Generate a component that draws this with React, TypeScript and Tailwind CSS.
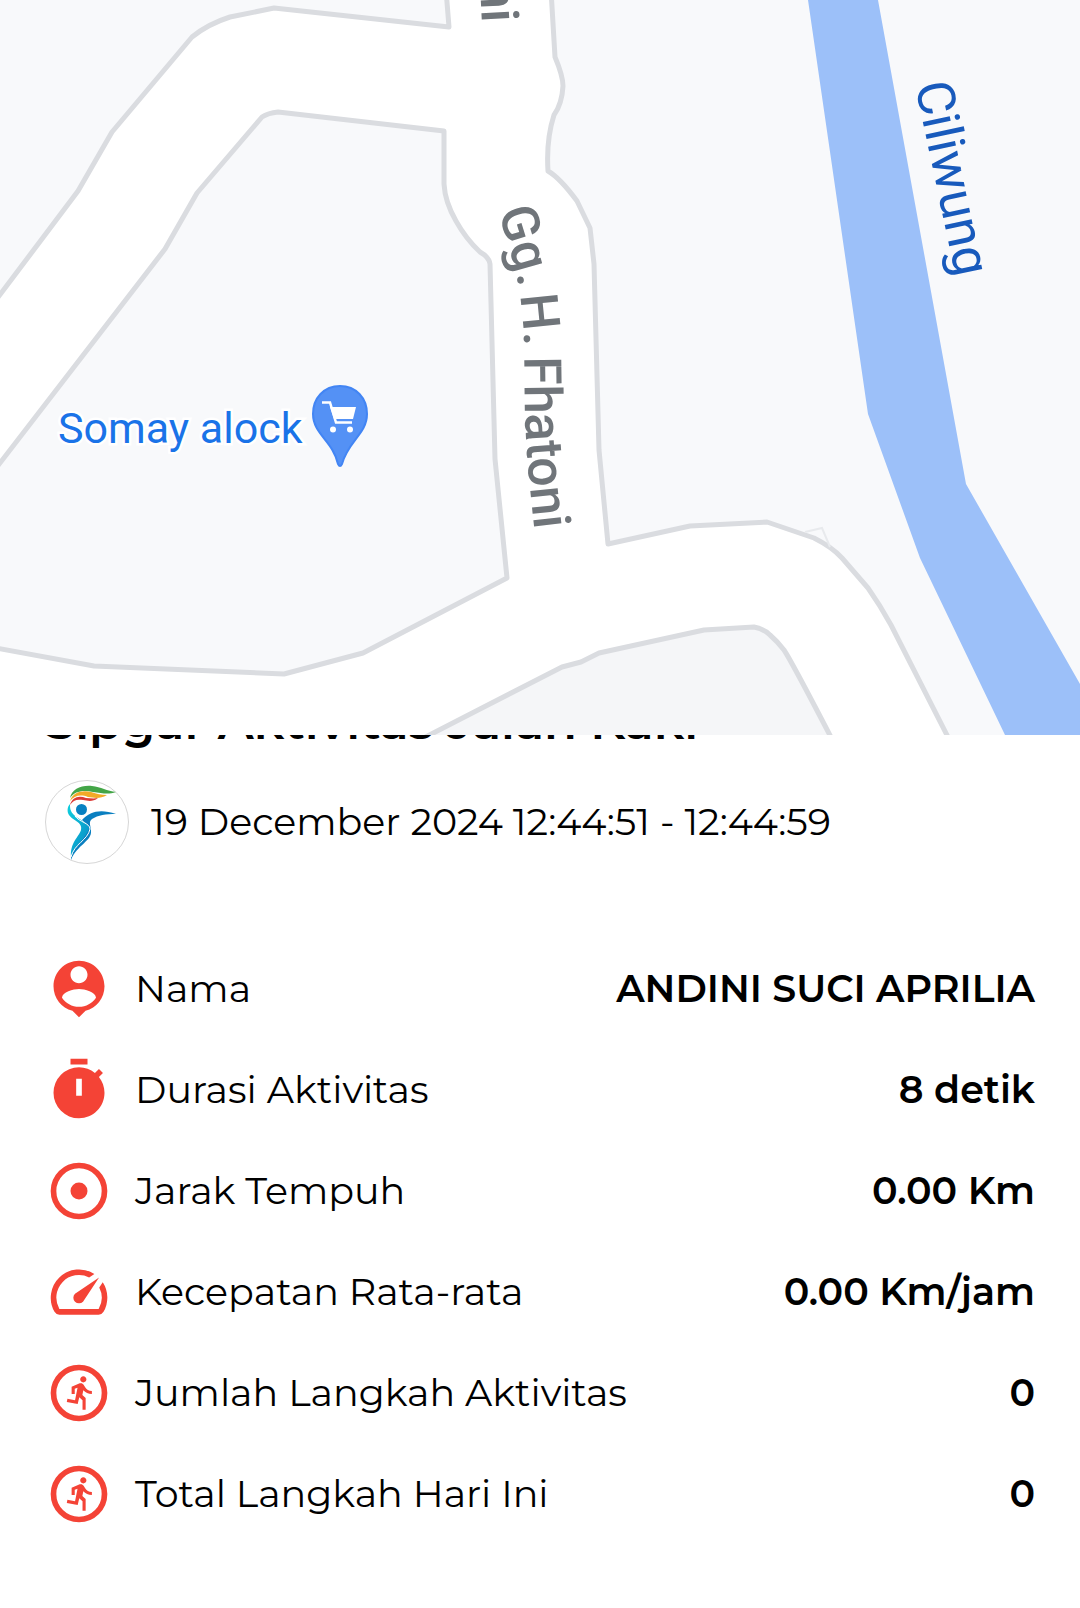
import React from "react";

const land = "fill-[#f8f9fb] stroke-[#dadce0]";

const MapView: React.FC = () => {
  return (
    <svg
      viewBox="0 0 1080 735"
      className="relative z-10 block h-auto w-full bg-white"
      role="img"
      aria-label="Peta rute aktivitas"
    >
      <rect width="1080" height="735" fill="#ffffff" />
      <g strokeWidth="5" strokeLinejoin="round" className={land}>
        <path d="M-10 308 L78 191 L112 132 L192 37 Q208 24 230 17 L274 8 L449 27 L446 -10 H-10 Z" />
        <path d="M-10 476 L165 249 L197 193 L262 117 Q268 113 278 112 L444 131 L444 184 Q445 202 456 221 Q466 239 480 252 Q489 257 490 264 L495 459 L507 578 L363 653 L284 674 L94 666 L-10 647 Z" />
        <path d="M551 -10 L555 57 Q563 76 563 86 Q562 104 554 115 Q546 140 548 171 Q560 178 577 201 L590 228 L594 264 L599 450 L608 544 L690 526 L767 522 L814 538 Q832 547 842 558 L868 588 Q880 605 891 625 L952 745 H1090 V-10 Z" />
        <path
          d="M410 745 L480 709 L562 667 L581 662 L599 653 L704 630 L754 627 Q764 629 770 635 Q778 642 784 650 Q792 662 835 745 Z"
          fill="#f5f6f8"
        />
      </g>
      <path
        d="M805 532 L822 528 L830 547"
        fill="none"
        stroke="#e8eaed"
        strokeWidth="2"
      />
      <path
        d="M808 0 L868 414 L920 558 L1005 735 H1080 V684 L966 484 L878 0 Z"
        fill="#9cc0f9"
      />

      <g className="font-['Roboto',sans-serif]">
        <g fill="#70757a" fontSize="52" fontWeight="500">
          <path
            id="street"
            d="M498 212 Q506 236 515 268 Q522 300 524 340 L525 420 Q527 470 538 560"
            fill="none"
          />
          <text>
            <textPath href="#street">
              Gg. <tspan dx="-6">H. </tspan>
              <tspan dx="-3">Fhatoni</tspan>
            </textPath>
          </text>
          <text textAnchor="end" transform="translate(482 23) rotate(87)">
            Gg. H. Fhatoni
          </text>
        </g>
        <text
          fontSize="52"
          fill="#185abc"
          transform="translate(915 85) rotate(78)"
        >
          Ciliwung
        </text>
        <text
          x="58"
          y="443"
          fontSize="43"
          fill="#1a73e8"
          stroke="#ffffff"
          strokeWidth="5"
          paintOrder="stroke"
        >
          Somay alock
        </text>
      </g>

      <path
        d="M340 386 C324 386 313 398 313 414 C313 434 333 441 338 464 Q340 468 342 464 C348 441 367 434 367 414 C367 398 356 386 340 386 Z"
        fill="#5491f5"
        stroke="#4285f4"
        strokeWidth="2"
      />
      <path d="M330 407 H356 L353 419 H334 Z" fill="#ffffff" />
      <path
        d="M322 402.500 H330 L336 422.500 H352"
        fill="none"
        stroke="#ffffff"
        strokeWidth="2.500"
      />
      <circle cx="333" cy="429.500" r="3" fill="#ffffff" />
      <circle cx="350" cy="429.500" r="3" fill="#ffffff" />
    </svg>
  );
};

const Logo: React.FC = () => {
  return (
    <svg viewBox="0 0 84 84" className="size-[84px] shrink-0" aria-hidden="true">
      <defs>
        <linearGradient id="body" x1="0" y1="0" x2="1" y2="1">
          <stop offset="0" stopColor="#0fd0de" />
          <stop offset="1" stopColor="#0786c4" />
        </linearGradient>
      </defs>
      <circle cx="42" cy="42" r="41.500" fill="#ffffff" stroke="#d6d6d6" />
      <path
        d="M25 18 C27 9 36 5 47 6 C56 7 62 11 71 12 C63 15 57 13 48 12 C38 10 30 11 25 18 Z"
        fill="#43a547"
      />
      <path
        d="M25 21 C28 12 37 10 46 12 C52 14 56 15 62 15 C55 19 50 18 43 17 C35 14 29 16 25 21 Z"
        fill="#f2aa27"
      />
      <path
        d="M25 25 C27 17 34 15 41 18 C45 18 48 19 53 18 C48 22 43 21 38 20 C32 19 28 20 25 25 Z"
        fill="#dc3a35"
      />
      <circle cx="36.500" cy="29.500" r="5.500" fill="#0781c2" />
      <path
        d="M37 40 C45 31 56 29 71 34 C61 34 53 35 47 39 C43 42 46 46 46 51 C47 61 32 65 26 80 C26 68 40 59 43 48 C44 45 40 43 37 40 Z"
        fill="#0a7fc0"
      />
      <path
        d="M25 24 C22 27 22 32 24 35 C28 41 38 42 36 50 C34 57 25 62 26 77 C29 66 42 57 44 48 C43 42 34 40 29 35 C25 31 25 28 25 24 Z"
        fill="url(#body)"
      />
      <path
        d="M30 36 C34 42 45 43 45 49 C43 60 29 64 26 77"
        fill="none"
        stroke="#ffffff"
        strokeWidth="1"
      />
    </svg>
  );
};

const RunCircle = (
  <>
    <circle cx="12" cy="12" r="9" fill="none" stroke="currentColor" strokeWidth="2" />
    <path
      transform="translate(6.1 5.25) scale(.55)"
      d="M13.49 5.48c1.1 0 2-.9 2-2s-.9-2-2-2-2 .9-2 2 .9 2 2 2zm-3.6 13.9l1-4.4 2.1 2v6h2v-7.5l-2.1-2 .6-3c1.3 1.5 3.3 2.5 5.5 2.500v-2c-1.9 0-3.5-1-4.3-2.4l-1-1.6c-.4-.6-1-1-1.7-1-.3 0-.5.1-.8.1l-5.2 2.2v4.7h2v-3.4l1.8-.7-1.6 8.1-4.9-1-.4 2 7 1.4z"
    />
  </>
);

const stats = [
  {
    label: "Nama",
    value: "ANDINI SUCI APRILIA",
    icon: (
      <path d="M12 2c-4.97 0-9 4.03-9 9 0 4.17 2.84 7.67 6.69 8.69L12 22l2.31-2.31C18.16 18.67 21 15.17 21 11c0-4.97-4.03-9-9-9zm0 2c1.66 0 3 1.34 3 3s-1.34 3-3 3-3-1.34-3-3 1.34-3 3-3zm0 14.3c-2.5 0-4.71-1.28-6-3.22.03-1.99 4-3.08 6-3.08 1.99 0 5.97 1.09 6 3.08-1.29 1.94-3.5 3.22-6 3.22z" />
    ),
  },
  {
    label: "Durasi Aktivitas",
    value: "8 detik",
    icon: (
      <path d="M19.03 7.39l1.42-1.42c-.45-.51-.9-.97-1.41-1.41L17.62 6C16.07 4.74 14.12 4 12 4a9 9 0 0 0-9 9 9 9 0 0 0 9 9c5 0 9-4.03 9-9 0-2.12-.74-4.07-1.97-5.61M13 14h-2V8h2v6m2-13H9v2h6V1z" />
    ),
  },
  {
    label: "Jarak Tempuh",
    value: "0.00 Km",
    icon: (
      <>
        <circle cx="12" cy="12" r="9" fill="none" stroke="currentColor" strokeWidth="2" />
        <circle cx="12" cy="12" r="3" />
      </>
    ),
  },
  {
    label: "Kecepatan Rata-rata",
    value: "0.00 Km/jam",
    icon: (
      <path d="M20.38 8.57l-1.23 1.85a8 8 0 0 1-.22 7.58H5.07A8 8 0 0 1 15.58 6.85l1.85-1.23A10 10 0 0 0 3.35 19a2 2 0 0 0 1.72 1h13.85a2 2 0 0 0 1.74-1 10 10 0 0 0-.27-10.44zM10.59 15.41a2 2 0 0 0 2.83 0l5.66-8.49-8.49 5.66a2 2 0 0 0 0 2.83z" />
    ),
  },
  { label: "Jumlah Langkah Aktivitas", value: "0", icon: RunCircle },
  { label: "Total Langkah Hari Ini", value: "0", icon: RunCircle },
];

const App: React.FC = () => {
  return (
    <main className="min-h-screen w-full bg-white font-['Montserrat','Inter',sans-serif] text-black">
      <MapView />
      <section className="px-[45px] pb-20">
        <h1 className="-mt-[43px] text-[48px] leading-[60px] font-semibold">
          Sipgar Aktivitas Jalan Kaki
        </h1>
        <div className="mt-7 flex items-center gap-[22px]">
          <Logo />
          <p className="text-[38px] leading-12 font-normal">
            19 December 2024 12:44:51 - 12:44:59
          </p>
        </div>
        <dl className="mt-[91px] flex flex-col gap-[33px]">
          {stats.map((stat) => (
            <div key={stat.label} className="flex items-center">
              <svg
                viewBox="0 0 24 24"
                className="mr-[22px] size-[68px] shrink-0 text-[#f44336]"
                fill="currentColor"
                aria-hidden="true"
              >
                {stat.icon}
              </svg>
              <dt className="text-[38px] leading-12 font-normal">{stat.label}</dt>
              <dd className="ml-auto text-right text-[38px] leading-12 font-semibold">
                {stat.value}
              </dd>
            </div>
          ))}
        </dl>
      </section>
    </main>
  );
};

export default App;
